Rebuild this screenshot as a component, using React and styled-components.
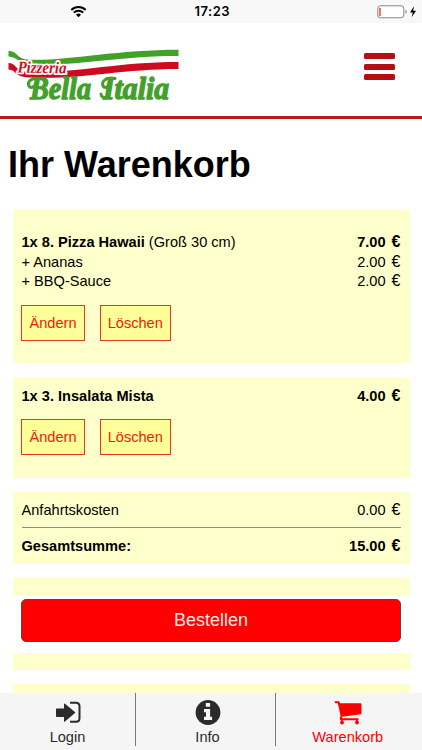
import React from 'react';
import styled, { createGlobalStyle } from 'styled-components';

const GlobalStyle = createGlobalStyle`
  * { box-sizing: border-box; }
  body { margin: 0; background: #fff; overflow: hidden; }
`;

const Screen = styled.div`
  width: 422px;
  height: 750px;
  display: flex;
  flex-direction: column;
  overflow: hidden;
  background: #fff;
  color: #000;
  font-family: 'Liberation Sans', Arial, sans-serif;
  font-size: 14.6px;
`;

const StatusBar = styled.div`
  flex: none;
  height: 23px;
  display: grid;
  grid-template-columns: 124.5px auto 1fr;
  align-items: center;
  background: #f8f8f8;
  padding: 0 5px 0 70px;
`;

const Clock = styled.span`
  font-family: Inter, sans-serif;
  font-size: 13px;
  font-weight: 600;
  line-height: 23px;
  letter-spacing: 0.5px;
`;

const BatteryGroup = styled.div`
  display: flex;
  justify-content: flex-end;
`;

const Header = styled.header`
  flex: none;
  height: 96px;
  display: flex;
  justify-content: space-between;
  align-items: flex-start;
  padding: 23px 27px 0 8px;
  border-bottom: 3px solid #b51a1e;
`;

const MenuButton = styled.button`
  width: 31px;
  height: 27px;
  margin-top: 7px;
  padding: 0;
  border: 0;
  background: none;
  display: flex;
  flex-direction: column;
  justify-content: space-between;
`;

const MenuBar = styled.span`
  width: 100%;
  height: 6px;
  border-radius: 1.5px;
  background: #b40f12;
`;

const Content = styled.main`
  flex: 1;
  min-height: 0;
  overflow: hidden;
  padding: 0 12.5px 0 13px;
`;

const Title = styled.h1`
  margin: 26px 0 25px -5px;
  font-size: 36px;
  line-height: 40px;
  font-weight: 700;
  white-space: nowrap;
`;

const Panel = styled.section`
  height: ${(p) => p.$height}px;
  padding: ${(p) => p.$top || 0}px 9px 0 8.5px;
  margin-bottom: ${(p) => p.$gap ?? 14.5}px;
  background: #ffffcc;
`;

const Line = styled.div`
  display: flex;
  justify-content: space-between;
  height: 19.3px;
  line-height: 19.3px;
  font-weight: ${(p) => (p.$bold ? 700 : 400)};
`;

const Variant = styled.span`
  font-weight: 400;
`;

const Amount = styled.span`
  display: flex;
  gap: 6px;
`;

const Currency = styled.span`
  font-size: 16px;
  line-height: 18.3px;
`;

const Actions = styled.div`
  display: flex;
  gap: 14.5px;
  margin: ${(p) => p.$top}px 0 0 -0.5px;
`;

const ActionButton = styled.button`
  width: ${(p) => p.$width}px;
  height: 36px;
  padding: 0;
  border: 1px solid #e23a24;
  background: #ffff99;
  color: #f01b0c;
  font: inherit;
`;

const Divider = styled.hr`
  height: 1px;
  margin: 7px 0 9px;
  border: 0;
  background: #8e8e96;
`;

const OrderButton = styled.button`
  display: block;
  width: 380px;
  height: 43px;
  margin: 0 0 11px 8px;
  padding: 0;
  border: 1px solid #62403c;
  border-radius: 5px;
  background: #ff0000;
  color: #ffe9e6;
  font: inherit;
  font-size: 18px;
`;

const TabBar = styled.nav`
  flex: none;
  height: 57.5px;
  display: grid;
  grid-template-columns: 136px 140px 1fr;
  background: #f5f5f5;
`;

const Tab = styled.a`
  height: 53px;
  display: grid;
  grid-template-rows: 28px 18px;
  justify-items: center;
  align-content: start;
  padding: 7px ${(p) => p.$right || 0}px 0 ${(p) => p.$left || 0}px;
  border-right: ${(p) => (p.$last ? '0' : '1px solid #77777a')};
  color: ${(p) => (p.$active ? '#ff0000' : '#2b2b2b')};
  line-height: 18px;
`;

const Wifi = () => (
  <svg width="17" height="14" viewBox="0 0 17 14">
    <path d="M8.5 12.2 6 9.7a3.6 3.6 0 0 1 5 0Z" fill="#000" />
    <path d="M3.8 7.6a6.6 6.6 0 0 1 9.4 0M1.3 5a10.2 10.2 0 0 1 14.4 0" fill="none" stroke="#000" strokeWidth="2" />
  </svg>
);

const Battery = () => (
  <svg width="40" height="15" viewBox="0 0 40 15">
    <rect x="0.8" y="1.8" width="26" height="12" rx="2.8" fill="#fff" stroke="#858585" />
    <rect x="2.3" y="3.7" width="1.4" height="8.2" rx="0.5" fill="#ed3833" />
    <path d="M28.5 5.8c1.7.7 1.7 3.3 0 4Z" fill="#858585" />
    <path d="M37 2.2 33 8.4h2.8l-1.2 4.9 4.5-6.6h-2.9Z" fill="#000" />
  </svg>
);

const Logo = () => (
  <svg width="172" height="66" viewBox="8 46 172 66" role="img" aria-label="Pizzeria Bella Italia">
    <path d="M8.5 50.700C17 51 17 58 26 59.500C60 62 115 49.700 178.500 49.700V56C116 56 75 67 28 64C17 63 18 57 8.500 56.500Z" fill="#43a02b" />
    <path d="M8.500 63C16 63 16 71 26 72C75 74 114 62 178.500 62V69C120 69 78 80 34 77.500C12 78 18 70 8.500 69.500Z" fill="#cc0a20" />
    <g fontFamily="Liberation Serif, serif" fontStyle="italic" fontWeight="700">
      <text x="17.500" y="73" fontSize="16.500" textLength="49" lengthAdjust="spacingAndGlyphs" transform="rotate(1 42 70)" fill="#d20c24" stroke="#fff" strokeWidth="3.500" strokeLinejoin="round" paintOrder="stroke">Pizzeria</text>
      <g fill="#43a02b" stroke="#43a02b" strokeWidth="1.300" strokeLinejoin="round" fontSize="31">
        <text x="30" y="98.500" textLength="61" lengthAdjust="spacingAndGlyphs">Bella</text>
        <text x="103" y="98.500" textLength="66" lengthAdjust="spacingAndGlyphs">Italia</text>
      </g>
    </g>
    <g fill="none" stroke="#43a02b" strokeWidth="3" strokeLinecap="round">
      <path d="M39 78.500C31 77.500 27 82 29 86C30 88 33 88 34 86" />
      <path d="M115 78.500C107 76.500 101 81 103 86C104 88 107 88 108 86M107 97C104 98 101 97 101 94" />
    </g>
  </svg>
);

const LoginIcon = () => (
  <svg width="26" height="24" viewBox="0 0 26 24">
    <path d="M1 9.300Q1 8.500 1.800 8.500H9V4Q9 3 10 3.800L20.500 12.500 10 21.500Q9 22.300 9 21.300V17H1.800Q1 17 1 16.200Z" fill="currentColor" />
    <path d="M15 2.700H21Q24.500 2.700 24.500 6.200V18.200Q24.500 21.700 21 21.700H15" fill="none" stroke="currentColor" strokeWidth="2" />
  </svg>
);

const InfoIcon = () => (
  <svg width="26" height="26" viewBox="0 0 26 26">
    <circle cx="13" cy="12.500" r="12.400" fill="currentColor" />
    <path d="M10.800 3h4.300v3.800h-4.300ZM9 9h6.100v7.700h2v3.200H9v-3.200h2v-4.400H9Z" fill="#f5f5f5" />
  </svg>
);

const CartIcon = () => (
  <svg width="28" height="25" viewBox="0 0 28 25">
    <path d="M0.400 1.200H5L6.200 3.300H26.600Q27.500 3.300 27.500 4.200V13.200Q27.500 14 26.600 14.200L8.200 16.700 7.900 18.300H24.500V20.300H6.200L5.800 18.500 6.500 15.500 3.800 3.200H1.200Z" fill="currentColor" />
    <path d="M8 19V22M23 19V22" stroke="currentColor" strokeWidth="1.500" />
    <circle cx="8" cy="22.500" r="1.900" fill="currentColor" />
    <circle cx="23" cy="22.500" r="1.900" fill="currentColor" />
  </svg>
);

const Price = ({ value }) => (
  <Amount><span>{value}</span><Currency>€</Currency></Amount>
);

const ItemActions = ({ top }) => (
  <Actions $top={top}>
    <ActionButton $width={64}>Ändern</ActionButton>
    <ActionButton $width={71.5}>Löschen</ActionButton>
  </Actions>
);

export default function App() {
  return (
    <>
      <GlobalStyle />
      <Screen>
        <StatusBar>
          <Wifi />
          <Clock>17:23</Clock>
          <BatteryGroup><Battery /></BatteryGroup>
        </StatusBar>
        <Header>
          <Logo />
          <MenuButton aria-label="Menü"><MenuBar /><MenuBar /><MenuBar /></MenuButton>
        </Header>
        <Content>
          <Title>Ihr Warenkorb</Title>
          <Panel $height={153} $top={23.3}>
            <Line $bold><span>1x 8. Pizza Hawaii <Variant>(Groß 30 cm)</Variant></span><Price value="7.00" /></Line>
            <Line><span>+ Ananas</span><Price value="2.00" /></Line>
            <Line><span>+ BBQ-Sauce</span><Price value="2.00" /></Line>
            <ItemActions top={13.8} />
          </Panel>
          <Panel $height={100} $top={9}>
            <Line $bold><span>1x 3. Insalata Mista</span><Price value="4.00" /></Line>
            <ItemActions top={13.2} />
          </Panel>
          <Panel $height={72} $top={9} $gap={14}>
            <Line><span>Anfahrtskosten</span><Price value="0.00" /></Line>
            <Divider />
            <Line $bold><span>Gesamtsumme:</span><Price value="15.00" /></Line>
          </Panel>
          <Panel $height={17} $gap={4} />
          <OrderButton>Bestellen</OrderButton>
          <Panel $height={17} $gap={14} />
          <Panel $height={17} />
        </Content>
        <TabBar>
          <Tab><LoginIcon /><span>Login</span></Tab>
          <Tab $left={4}><InfoIcon /><span>Info</span></Tab>
          <Tab $active $last $right={2.5}><CartIcon /><span>Warenkorb</span></Tab>
        </TabBar>
      </Screen>
    </>
  );
}
